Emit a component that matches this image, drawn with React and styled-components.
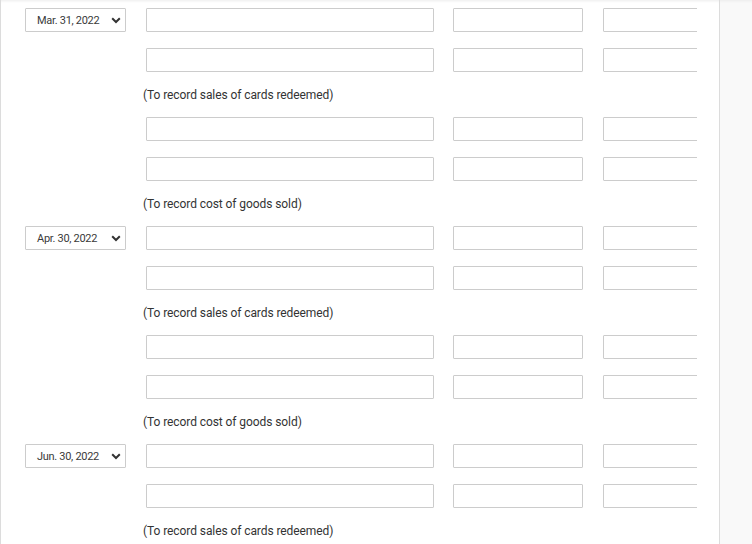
import React from 'react';
import styled, { createGlobalStyle } from 'styled-components';

const GlobalStyle = createGlobalStyle`
  html, body {
    margin: 0;
    padding: 0;
    background: #fff;
    font-family: Roboto, "Liberation Sans", sans-serif;
  }
`;

const Page = styled.div`
  display: flex;
  width: 752px;
  height: 544px;
  overflow: hidden;
`;

const Main = styled.div`
  width: 718px;
  flex-shrink: 0;
  border-left: 1px solid #dcdcdc;
  background: #fff;
  box-shadow: inset 0 3px 3px -2px rgba(0, 0, 0, 0.08);
`;

const Gutter = styled.div`
  flex: 1;
  border-left: 1px solid #dcdcdc;
  background: #f9f9f9;
  box-shadow: inset 0 3px 3px -2px rgba(0, 0, 0, 0.06);
`;

const Sheet = styled.div`
  width: 696px;
  overflow: hidden;
  padding-top: 8px;
`;

const Row = styled.div`
  display: flex;
  align-items: center;
  height: 24px;
  margin-bottom: 16px;
`;

const DateCell = styled.div`
  width: 101px;
  margin-left: 24px;
  margin-right: 20px;
  flex-shrink: 0;
`;

const Select = styled.div`
  box-sizing: border-box;
  height: 24px;
  border: 1px solid #cccccc;
  border-radius: 1px;
  display: flex;
  align-items: center;
  padding: 0 4px 0 11px;
  font-size: 11px;
  letter-spacing: -0.3px;
  color: #3a3a3a;
  background: #fff;

  span {
    flex: 1;
  }

  svg {
    flex-shrink: 0;
  }
`;

const Field = styled.div`
  box-sizing: border-box;
  flex-shrink: 0;
  height: 24px;
  width: ${(p) => p.$w}px;
  margin-right: ${(p) => p.$gap || 0}px;
  border: 1px solid #cccccc;
  border-radius: 1px;
  background: #fff;
`;

const Note = styled.div`
  padding-left: 142px;
  font-size: 12px;
  line-height: 16px;
  letter-spacing: -0.08px;
  color: #333;
  margin-top: -1px;
  margin-bottom: 14px;
`;

function Chevron() {
  return (
    <svg width="10" height="7" viewBox="0 0 10 7">
      <path d="M1.2 1.3 L5 5 L8.8 1.3" fill="none" stroke="#333" strokeWidth="2" />
    </svg>
  );
}

function EntryRow({ date }) {
  return (
    <Row>
      <DateCell>
        {date && (
          <Select>
            <span>{date}</span>
            <Chevron />
          </Select>
        )}
      </DateCell>
      <Field $w={288} $gap={19} />
      <Field $w={130} $gap={20} />
      <Field $w={130} />
    </Row>
  );
}

const blocks = [
  { date: 'Mar. 31, 2022', note: '(To record sales of cards redeemed)' },
  { note: '(To record cost of goods sold)' },
  { date: 'Apr. 30, 2022', note: '(To record sales of cards redeemed)' },
  { note: '(To record cost of goods sold)' },
  { date: 'Jun. 30, 2022', note: '(To record sales of cards redeemed)' },
];

export default function App() {
  return (
    <>
      <GlobalStyle />
      <Page>
        <Main>
          <Sheet>
            {blocks.map((b, i) => (
              <div key={i}>
                <EntryRow date={b.date} />
                <EntryRow />
                <Note>{b.note}</Note>
              </div>
            ))}
          </Sheet>
        </Main>
        <Gutter />
      </Page>
    </>
  );
}
